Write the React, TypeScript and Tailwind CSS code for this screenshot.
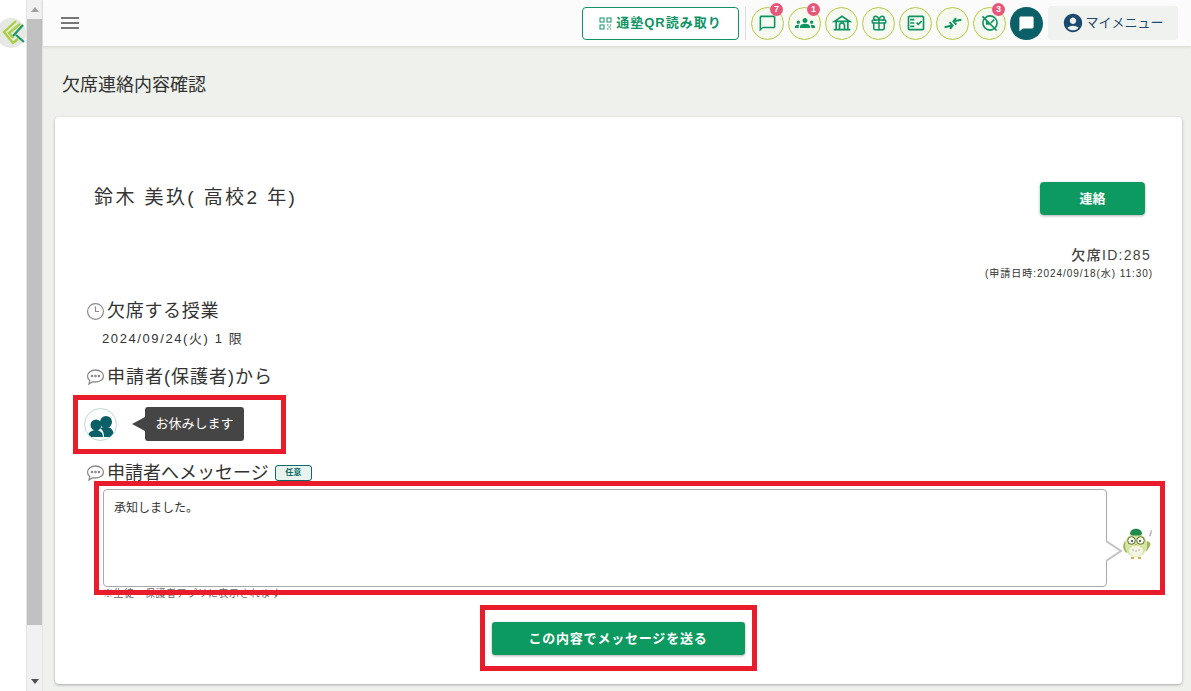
import { Clock3, Gift } from "lucide-react"
import { MdAccountCircle, MdGroups, MdMenu, MdOutlineChatBubbleOutline, MdOutlineFactCheck } from "react-icons/md"
import type { ReactNode } from "react"

const font = "font-['Liberation_Sans','Noto_Sans_CJK_JP',sans-serif]"

function RoundIcon({ children, badge }: { children: ReactNode; badge?: string }) {
  return (
    <div className="relative flex h-[33px] w-[33px] shrink-0 items-center justify-center rounded-full border border-[#b5c93f] bg-[#f6f9f0] text-[#0d9462]">
      {children}
      {badge && (
        <span className="absolute -top-[5px] left-[18px] flex h-[13px] w-[13px] items-center justify-center rounded-full bg-[#e8557b] text-[9px] leading-none font-bold text-white">
          {badge}
        </span>
      )}
    </div>
  )
}

function BubbleDots() {
  return (
    <svg width="19" height="18" viewBox="0 0 19 18" fill="none" stroke="#8a8a8a" strokeWidth="1.300">
      <path d="M9.500 2c4.400 0 8 2.500 8 6s-3.600 6-8 6c-.9 0-1.800-.1-2.600-.3L3 16l.8-3.400C2.400 11.500 1.500 9.900 1.500 8c0-3.500 3.600-6 8-6z" />
      <circle cx="6" cy="8" r=".7" fill="#8a8a8a" />
      <circle cx="9.500" cy="8" r=".7" fill="#8a8a8a" />
      <circle cx="13" cy="8" r=".7" fill="#8a8a8a" />
    </svg>
  )
}

function SectionTitle({ icon, children, className = "" }: { icon: ReactNode; children: ReactNode; className?: string }) {
  return (
    <div className={`flex items-center text-[18px] leading-[24px] text-[#333] ${className}`}>
      <span className="mr-px flex w-[21px] justify-center text-[#8a8a8a]">{icon}</span>
      {children}
    </div>
  )
}

function Owl() {
  return (
    <svg width="32" height="34" viewBox="0 0 32 34" className="shrink-0">
      <path d="M27 10l2-6 1.200.5-1.500 6z" fill="#b5b5b5" />
      <path d="M3 15c-3 4-2 10 2 12l3-5zM25 15c3 1 4 2 3 5l-4 6z" fill="#9db65a" />
      <ellipse cx="14" cy="19" rx="11" ry="12" fill="#d5e4a0" />
      <ellipse cx="14" cy="25" rx="7" ry="5.500" fill="#f5f6e2" />
      <path d="M8 8c0-7 12-7 12 0l-2 1.500h-8z" fill="#1f8a4c" />
      <circle cx="9.500" cy="14.500" r="3.800" fill="#f7f8e8" stroke="#55703a" strokeWidth="1" />
      <circle cx="18.500" cy="14.500" r="3.800" fill="#f7f8e8" stroke="#55703a" strokeWidth="1" />
      <circle cx="10" cy="15" r="1" fill="#333" />
      <circle cx="18" cy="15" r="1" fill="#333" />
      <path d="M13 18l1 1.800 1-1.800z" fill="#b78f2a" />
      <path d="M11 24h.1M14 25h.1M17 24h.1" stroke="#777" strokeWidth="1.200" strokeLinecap="round" />
      <path d="M9 32h3M16 32h3" stroke="#d6b044" strokeWidth="1.800" />
    </svg>
  )
}

export default function App() {
  return (
    <div className={`flex h-[691px] w-[1191px] overflow-hidden bg-white ${font}`}>
      <div className="w-[26px] shrink-0 overflow-hidden pt-[18px]">
        <div className="-ml-[4px] h-[30px] w-[30px] rounded-full bg-[#e6e8e4]">
          <svg width="30" height="30" viewBox="-4 0 30 30" fill="none" strokeWidth="2.300">
            <path d="M16 3L4 14l9 11 5-4" stroke="#a8cf3c" />
            <path d="M20 6L9 15l4 5" stroke="#a8cf3c" />
            <path d="M23 7L13 18M16 17l8 7" stroke="#1c9a68" />
          </svg>
        </div>
      </div>

      <div className="flex w-[17px] shrink-0 flex-col border-x border-[#e4e4e4] bg-[#f1f1f1]">
        <div className="flex h-[19px] items-center justify-center">
          <div className="h-0 w-0 border-x-[4px] border-b-[5px] border-x-transparent border-b-[#a0a0a0]" />
        </div>
        <div className="h-[606px] bg-[#c1c1c1]" />
        <div className="flex-1" />
        <div className="flex h-[19px] items-center justify-center">
          <div className="h-0 w-0 border-x-[4px] border-t-[5px] border-x-transparent border-t-[#505050]" />
        </div>
      </div>

      <div className="flex min-w-0 flex-1 flex-col bg-[#eef1ec]">
        <header className="flex h-[46px] shrink-0 items-center bg-[#fafbfa] pr-[13px] pl-[15px] shadow-[0_1px_3px_rgba(0,0,0,0.12)]">
          <MdMenu className="h-[24px] w-[24px] text-[#777]" />
          <div className="flex-1" />
          <button className="flex h-[33px] w-[157px] items-center justify-center gap-[4px] rounded border border-[#0d9462] bg-white text-[13px] font-bold tracking-[1px] text-[#0d9462]">
            <svg width="13" height="13" viewBox="0 0 13 13" fill="none" stroke="currentColor" strokeWidth="1">
              <rect x="1" y="1" width="4" height="4" />
              <rect x="8" y="1" width="4" height="4" />
              <rect x="1" y="8" width="4" height="4" />
              <path d="M8 8h1.500M11 8h1M9.500 10h2M8 12h1.500M11 12h1" />
            </svg>
            通塾QR読み取り
          </button>
          <div className="mr-[5px] ml-[6px] h-[33px] w-px bg-[#dddddd]" />
          <div className="flex items-center gap-[4px]">
            <RoundIcon badge="7"><MdOutlineChatBubbleOutline className="h-[19px] w-[19px]" /></RoundIcon>
            <RoundIcon badge="1"><MdGroups className="h-[20px] w-[20px]" /></RoundIcon>
            <RoundIcon>
              <svg width="20" height="20" viewBox="0 0 24 24" fill="none" stroke="currentColor" strokeWidth="2">
                <path d="M3 10l9-6 9 6zM5 10v9M19 10v9M2 20h20M9 19v-4a3 3 0 0 1 6 0v4" />
              </svg>
            </RoundIcon>
            <RoundIcon><Gift className="h-[18px] w-[18px]" strokeWidth={2} /></RoundIcon>
            <RoundIcon><MdOutlineFactCheck className="h-[20px] w-[20px]" /></RoundIcon>
            <RoundIcon>
              <svg width="20" height="20" viewBox="0 0 24 24" fill="none" stroke="currentColor" strokeWidth="2.400">
                <path d="M2 17l9-2M8 11l3.500 4-3 4" />
                <path d="M22 8l-9 2M16 14l-3.500-4 3-4" />
              </svg>
            </RoundIcon>
            <RoundIcon badge="3">
              <svg width="20" height="20" viewBox="0 0 24 24" fill="none" stroke="currentColor" strokeWidth="2">
                <circle cx="12" cy="12" r="8.500" />
                <path d="M3 4l17 17M13 12l4-4M8 9v4h4" />
              </svg>
            </RoundIcon>
            <div className="flex h-[33px] w-[33px] items-center justify-center rounded-full bg-[#0b5f66]">
              <svg width="17" height="17" viewBox="0 0 24 24" fill="#fff">
                <path d="M4 2h16a2 2 0 0 1 2 2v13a2 2 0 0 1-2 2H7l-5 4V4a2 2 0 0 1 2-2z" />
              </svg>
            </div>
          </div>
          <div className="ml-[5px] flex h-[34px] w-[130px] items-center justify-center gap-px rounded bg-[#f0f2ef] text-[13px] text-[#1c4a6e]">
            <MdAccountCircle className="h-[22px] w-[22px]" />
            マイメニュー
          </div>
        </header>

        <div className="flex flex-1 flex-col pt-[26px] pr-[9px] pb-[7px] pl-[12px]">
          <h1 className="mb-[19px] pl-[7px] text-[18px] leading-[26px] text-[#333]">欠席連絡内容確認</h1>

          <main className="flex-1 rounded bg-white pt-[65px] pr-[37px] pl-[23px] shadow-[0_1px_3px_rgba(0,0,0,0.3)]">
            <div className="flex items-center justify-between pl-[16px]">
              <div className="-mt-px text-[19px] tracking-[2.4px] text-[#333]">鈴木 美玖( 高校2 年)</div>
              <button className="h-[33px] w-[105px] rounded-sm bg-[#0c9a60] text-[13px] font-bold text-white shadow-[0_1px_3px_rgba(0,0,0,0.3)]">
                連絡
              </button>
            </div>

            <div className="mt-[31px] -mr-[6px] text-right">
              <div className="text-[14px] leading-[18px] font-medium tracking-[1.3px] text-[#444]">欠席ID:285</div>
              <div className="-mr-[2px] mt-[3px] text-[10px] leading-[14px] tracking-[0.95px] text-[#333]">(申請日時:2024/09/18(水) 11:30)</div>
            </div>

            <div className="mt-[18px] pl-[7px]">
              <SectionTitle className="tracking-[0.7px]" icon={<Clock3 className="h-[19px] w-[19px]" strokeWidth={1.5} />}>欠席する授業</SectionTitle>
              <div className="mt-[4px] pl-[17px] text-[13px] leading-[24px] tracking-[1.6px] text-[#333]">2024/09/24(火) 1 限</div>
              <div className="mt-[14px]">
                <SectionTitle className="tracking-[1px]" icon={<BubbleDots />}>申請者(保護者)から</SectionTitle>
              </div>
            </div>

            <div className="relative mt-[18px] ml-[6px] flex h-[34px] items-center">
              <div className="relative flex h-[33px] w-[33px] items-center justify-center overflow-hidden rounded-full border border-[#b9dcd0] bg-white">
                <svg width="28" height="26" viewBox="0 0 28 26" fill="#0b5f66">
                  <circle cx="9" cy="14" r="5.500" />
                  <circle cx="19" cy="11" r="6" />
                  <path d="M1 26c0-5 4-7 8-7 3 0 7 2 7 7zM13 17c2-1 4-1 6-1 5 0 8 3 8 10H17c0-4-1-7-4-9z" />
                </svg>
              </div>
              <div className="ml-[15px] h-0 w-0 border-y-[7px] border-r-[13px] border-y-transparent border-r-[#454545]" />
              <div className="flex h-[34px] w-[99px] items-center justify-center rounded-[3px] bg-[#454545] text-[13px] text-white">
                お休みします
              </div>
              <div className="pointer-events-none absolute -top-[12px] -left-[11px] h-[59px] w-[213px] border-[5px] border-[#e81c2a]" />
            </div>

            <div className="mt-[20px] ml-[7px] flex items-center">
              <SectionTitle icon={<BubbleDots />}>申請者へメッセージ</SectionTitle>
              <span className="ml-[6px] flex h-[16px] w-[37px] items-center justify-center rounded-[3px] border border-[#0b6a6a] bg-[#e8f3ee] text-[8px] font-bold text-[#0b6a6a]">
                任意
              </span>
            </div>

            <div className="relative mt-[4px] ml-[25px] flex items-center">
              <div className="h-[98px] w-[1004px] shrink-0 rounded border border-[#a9a9a9] px-[10px] py-[9px] text-[12px] leading-[18px] text-[#333]">
                承知しました。
              </div>
              <svg width="18" height="22" viewBox="0 0 18 22" fill="none" className="-ml-px mt-[25px] shrink-0">
                <path d="M0 1l15 10L0 21" stroke="#c3c3c3" strokeWidth="2" fill="#fff" />
              </svg>
              <div className="mt-[10px] -ml-[2px]"><Owl /></div>
              <div className="pointer-events-none absolute -top-[8px] -left-[9px] h-[114px] w-[1071px] border-[5px] border-[#e81c2a]" />
            </div>
            <div className="ml-[25px] text-[10px] leading-[13px] tracking-[0.5px] text-[#666]">※生徒・保護者アプリに表示されます</div>

            <div className="mt-[22px] flex justify-center pl-[13px]">
              <div className="relative">
                <button className="h-[33px] w-[253px] rounded-[3px] bg-[#0c9a60] text-[13px] font-bold tracking-[0.8px] text-white shadow-[0_1px_3px_rgba(0,0,0,0.3)]">
                  この内容でメッセージを送る
                </button>
                <div className="pointer-events-none absolute -top-[17px] -left-[12px] h-[66px] w-[277px] border-[5px] border-[#e81c2a]" />
              </div>
            </div>
          </main>
        </div>
      </div>
    </div>
  )
}
